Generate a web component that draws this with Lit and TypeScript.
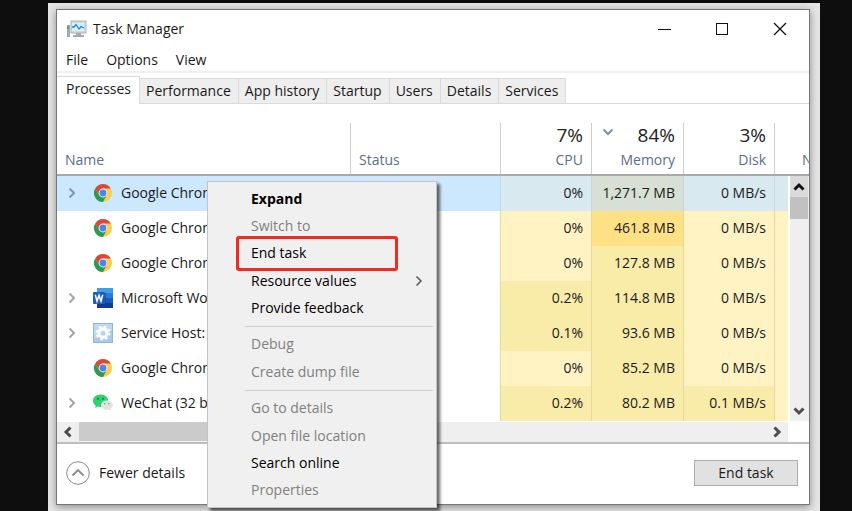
import { LitElement, html, svg, css, nothing } from "lit";
import { customElement, state } from "lit/decorators.js";
import { classMap } from "lit/directives/class-map.js";

type IconName = "chrome" | "word" | "gear" | "wechat";

interface ProcessRow {
  icon: IconName;
  name: string;
  group: boolean;
  cpu: string;
  memory: string;
  disk: string;
  cpuHeat: string;
  memoryHeat: string;
  diskHeat: string;
}

const row = (
  icon: IconName, name: string, group: boolean,
  cpu: string, memory: string, disk: string,
  cpuHeat = "low", memoryHeat = "mid", diskHeat = "low",
): ProcessRow => ({ icon, name, group, cpu, memory, disk, cpuHeat, memoryHeat, diskHeat });

const ROWS: ProcessRow[] = [
  row("chrome", "Google Chrome", true, "0%", "1,271.7 MB", "0 MB/s", "low", "max"),
  row("chrome", "Google Chrome", false, "0%", "461.8 MB", "0 MB/s", "low", "high"),
  row("chrome", "Google Chrome", false, "0%", "127.8 MB", "0 MB/s"),
  row("word", "Microsoft Word", true, "0.2%", "114.8 MB", "0 MB/s", "mid"),
  row("gear", "Service Host:", true, "0.1%", "93.6 MB", "0 MB/s", "mid"),
  row("chrome", "Google Chrome", false, "0%", "85.2 MB", "0 MB/s"),
  row("wechat", "WeChat (32 bit)", true, "0.2%", "80.2 MB", "0.1 MB/s", "mid", "mid", "mid"),
];

const TABS = ["Processes", "Performance", "App history", "Startup", "Users", "Details", "Services"];

interface MenuEntry { label: string; kind?: "bold" | "disabled" | "marked" | "sub"; }

const MENU: (MenuEntry | null)[] = [
  { label: "Expand", kind: "bold" },
  { label: "Switch to", kind: "disabled" },
  { label: "End task", kind: "marked" },
  { label: "Resource values", kind: "sub" },
  { label: "Provide feedback" },
  null,
  { label: "Debug", kind: "disabled" },
  { label: "Create dump file", kind: "disabled" },
  null,
  { label: "Go to details", kind: "disabled" },
  { label: "Open file location", kind: "disabled" },
  { label: "Search online" },
  { label: "Properties", kind: "disabled" },
];

const ICONS = {
  chrome: svg`
    <circle cx="10" cy="10" r="9" fill="#fccd48"/>
    <path d="M2.2 5.5 A9 9 0 0 0 10 19 L13.7 12.1 L6.3 12.1 Z" fill="#2a9a57"/>
    <path d="M2.2 5.5 A9 9 0 0 1 17.8 5.5 L10 5.5 L6.5 8 L6.3 12.1 Z" fill="#d9483b"/>
    <circle cx="10" cy="10" r="4.4" fill="#f1f3f4"/>
    <circle cx="10" cy="10" r="3.4" fill="#4a84ee"/>`,
  word: svg`
    <rect x="4" y="0" width="16" height="5" fill="#3f9fe6"/>
    <rect x="4" y="5" width="16" height="5" fill="#2b7cd3"/>
    <rect x="4" y="10" width="16" height="5" fill="#185abd"/>
    <rect x="4" y="15" width="16" height="5" fill="#103f91"/>
    <rect x="4" y="5" width="9" height="12" fill="#0d3a80" opacity=".5"/>
    <rect x="0" y="4" width="12" height="12" rx="1" fill="#1b5cbe"/>
    <path d="M2.3 6.8 L4 13.2 L6 7.4 L8 13.2 L9.7 6.8" fill="none" stroke="#fff" stroke-width="1.5"/>`,
  gear: svg`
    <rect x=".5" y=".5" width="19" height="19" fill="#a9cbe8" stroke="#8fb6d8"/>
    <path d="M1 1H19V8Q9 9 1 16Z" fill="#bfdaf0"/>
    <circle cx="10" cy="10" r="6.2" fill="none" stroke="#fff" stroke-width="2.4" stroke-dasharray="2.4 2.47"/>
    <circle cx="10" cy="10" r="4.1" fill="none" stroke="#fff" stroke-width="3.2"/>`,
  wechat: svg`
    <path d="M7.5 1.5C3.2 1.5 0 4.3 0 7.8c0 2 1.1 3.7 2.8 4.9L2 15l2.9-1.4c.8.2 1.7.4 2.6.4 4.300 0 7.700-2.700 7.700-6.200S11.800 1.500 7.500 1.500Z" fill="#2bd46c"/>
    <circle cx="5" cy="5.8" r="1" fill="#167a3f"/><circle cx="10" cy="5.8" r="1" fill="#167a3f"/>
    <path d="M13.8 7.5C10.3 7.5 8 9.7 8 12.2s2.300 4.700 5.800 4.700c.8 0 1.500-.1 2.200-.3l2.300 1.200-.6-2c1.300-.9 2.100-2.100 2.100-3.600 0-2.500-2.600-4.700-6-4.700Z" fill="#e3e3e3"/>
    <circle cx="11.8" cy="10.8" r=".8" fill="#8b8b8b"/><circle cx="15.7" cy="10.8" r=".8" fill="#8b8b8b"/>`,
};

const chevron = (dir: "right" | "left" | "up" | "down", kind = "") => {
  const d = {
    right: "M3.5 1.5 L8 6 L3.5 10.5",
    left: "M8.5 1.5 L4 6 L8.5 10.5",
    up: "M1.5 8.5 L6 4 L10.5 8.5",
    down: "M1.5 3.5 L6 8 L10.5 3.5",
  }[dir];
  return html`<svg class="chevron ${kind}" viewBox="0 0 12 12" aria-hidden="true"><path d=${d} /></svg>`;
};

@customElement("app-root")
export class AppRoot extends LitElement {
  @state() private activeTab = "Processes";

  static styles = css`
    :host {
      display: block;
      box-sizing: border-box;
      min-height: 100vh;
      padding: 3px 32px 0 48px;
      background: #0e0e0e;
      color: #1a1a1a;
      font: 14px/20px "Open Sans", "Noto Sans", sans-serif;
    }
    * { box-sizing: border-box; }
    button {
      margin: 0; padding: 0; border: 0; background: none;
      color: inherit; font: inherit; text-align: left;
    }
    svg { display: block; flex: none; }

    .stage { position: relative; padding: 6px 10px 6px 8px; background: #e6e6e6; }
    .window {
      background: #fff;
      border: 1px solid #777;
      box-shadow: 0 2px 8px #0006;
    }

    .titlebar { display: flex; align-items: center; height: 38px; padding-left: 9px; }
    .app-icon { width: 22px; height: 18px; margin-right: 5px; }
    .title { flex: 1; margin: 0; font-size: 14px; font-weight: 400; }
    .caption { display: flex; width: 58px; height: 38px; align-items: center; justify-content: center; }
    .caption svg { width: 14px; height: 14px; fill: none; stroke: #111; }

    .menubar { display: flex; gap: 18px; height: 25px; padding: 2px 9px; border-bottom: 2px solid #f0f0f0; }

    .tabs { display: flex; align-items: flex-end; height: 31px; border-bottom: 1px solid #dadada; }
    .tab {
      height: 25px; padding: 0 7px 0 6px; text-align: center; white-space: nowrap;
      background: #eeeeee; border: 1px solid #d9d9d9; border-width: 1px 1px 0 0;
    }
    .tab.active {
      height: 28px; margin-bottom: -1px; padding: 0 8px 3px 9px; background: #fff;
    }

    .sheet { display: grid; grid-template-columns: minmax(0, 1fr) 21px; }
    table {
      grid-area: 1 / 1 / 2 / 3;
      width: 100%; table-layout: fixed; border-collapse: separate; border-spacing: 0;
    }
    .c-status { width: 150px; }
    .c-num { width: 92px; }
    .c-cpu { width: 91px; }
    .c-net { width: 35px; }
    th {
      height: 72px; padding: 19px 0 0; overflow: hidden; vertical-align: bottom;
      border-bottom: 2px solid #a9a9a9; color: #5c6d88; font-weight: 400; text-align: left;
    }
    .head {
      display: flex; flex-direction: column; justify-content: flex-end; gap: 3px;
      height: 51px; padding: 0 8px 4px; border-left: 1px solid #cfcfcf; white-space: nowrap;
    }
    .head.first { border-left: 0; }
    .head.num { text-align: right; }
    .head.net { padding-left: 27px; }
    .load { display: flex; justify-content: flex-end; align-items: center; color: #222; font-size: 19px; line-height: 24px; }
    .load .sort { margin: 0 auto 6px 2px; }

    td { height: 35px; padding: 0 8px 2px; white-space: nowrap; overflow: hidden; }
    td.heat { text-align: right; border-left: 1px solid #e6d9a0; }
    .low { background: #fff3c4; }
    .mid { background: #f9eba8; }
    .high { background: #ffe185; }
    .selected td { background: #cce8ff; }
    .selected td.heat { background: #d8e9ef; border-left-color: #c3d9e2; }
    .selected td.heat.max { background: #d8e0d5; }
    .proc { display: flex; align-items: center; }
    .twist { width: 14px; height: 20px; margin-right: 14px; display: grid; place-items: center; }
    .proc-icon { width: 20px; height: 20px; margin-right: 8px; }

    .chevron { width: 12px; height: 12px; fill: none; stroke: #222; stroke-width: 2; }
    .chevron.soft { stroke: #a0a5aa; }
    .chevron.bar { stroke: #4d4d4d; stroke-width: 3; }
    .chevron.dark { stroke: #111; stroke-width: 3; }
    .chevron.sort { stroke: #7d8f9f; }
    .chevron.thin { stroke: #555; stroke-width: 1.5; }
    .selected .chevron { stroke: #8397a8; }

    .vscroll {
      grid-area: 1 / 2 / 2 / 3; margin-top: 72px; padding-right: 1px;
      display: flex; flex-direction: column; background: #efefef; border-left: 2px solid #fff;
    }
    .vscroll button { height: 21px; display: grid; place-items: center; }
    .vscroll .up { background: #dadada; }
    .vthumb { height: 22px; background: #c1c1c1; }
    .vscroll .down { margin-top: auto; }

    .hscroll {
      display: flex; height: 20px; margin: 1px 21px 0 0; background: #efefef;
    }
    .hscroll button { width: 22px; height: 20px; display: grid; place-items: center; }
    .hthumb { flex: none; width: 45%; height: 19px; background: #cbcbcb; }
    .hscroll .right { margin-left: auto; }

    .footer {
      display: flex; align-items: center; justify-content: space-between;
      height: 62px; padding: 0 11px 2px 9px; border-top: 2px solid #bdbdbd;
    }
    .fewer { display: flex; align-items: center; gap: 9px; }
    .round { width: 24px; height: 24px; fill: none; stroke: #8a8a8a; }
    .end { width: 104px; height: 26px; text-align: center; background: #e1e1e1; border: 1px solid #adadad; }

    .context {
      position: absolute; left: 159px; top: 178px; width: 230px; height: 327px;
      display: flex; flex-direction: column; padding: 3px 0;
      background: #f0f0f0; border: 1px solid #c4c4c4;
      box-shadow: 3px 3px 3px #0009; color: #000;
    }
    .item { position: relative; flex: 1; display: flex; align-items: center; padding: 0 11px 0 43px; }
    .item span { flex: 1; }
    .item.bold { font-weight: 700; }
    .item:disabled { color: #808080; }
    .context hr { height: 1px; margin: 4px 3px 4px 37px; border: 0; background: #cfcfcf; }
    .item.marked::after {
      content: ""; position: absolute; inset: -4px 38px -4px 28px;
      border: 3px solid #f22a22; border-radius: 3px;
    }
  `;

  private renderRow(r: ProcessRow, i: number) {
    return html`<tr class=${classMap({ selected: i === 0 })}>
      <td>
        <div class="proc">
          ${r.group
            ? html`<button class="twist" aria-label="Expand group">${chevron("right", "soft")}</button>`
            : html`<div class="twist"></div>`}
          <svg class="proc-icon" viewBox="0 0 20 20" aria-hidden="true">${ICONS[r.icon]}</svg>
          ${r.name}
        </div>
      </td>
      <td></td>
      <td class="heat ${r.cpuHeat}">${r.cpu}</td>
      <td class="heat ${r.memoryHeat}">${r.memory}</td>
      <td class="heat ${r.diskHeat}">${r.disk}</td>
      <td class="heat low"></td>
    </tr>`;
  }

  private renderMenuEntry(e: MenuEntry | null) {
    if (!e) return html`<hr />`;
    return html`<button class="item ${e.kind ?? ""}" role="menuitem" ?disabled=${e.kind === "disabled"}>
      <span>${e.label}</span>${e.kind === "sub" ? chevron("right", "thin") : nothing}
    </button>`;
  }

  render() {
    return html`
      <div class="stage">
        <main class="window">
          <header class="titlebar">
            <svg class="app-icon" viewBox="0 0 22 18" aria-hidden="true">
              <rect x="1" y="5" width="3" height="12" fill="#a3a9ad" />
              <rect x="1" y="6" width="2" height="3" fill="#4fae54" />
              <rect x="5" y="1" width="15" height="12" fill="#d5d9dc" stroke="#aeb3b7" />
              <rect x="6" y="3" width="12" height="8" fill="#d6efff" />
              <path d="M6 7 L8 7 L10 4.5 L13 9 L15 6.5 L18 8" fill="none" stroke="#2385c6" stroke-width="1.3" />
              <path d="M10 13H15V15H18V17H7V15H10Z" fill="#a6abaf" />
            </svg>
            <h1 class="title">Task Manager</h1>
            <button class="caption" aria-label="Minimize"><svg viewBox="0 0 14 14"><path d="M1 7.5H14" /></svg></button>
            <button class="caption" aria-label="Maximize"><svg viewBox="0 0 14 14"><rect x="1.5" y="1.5" width="11" height="11" /></svg></button>
            <button class="caption" aria-label="Close"><svg viewBox="0 0 14 14"><path d="M1 1L13 13M13 1L1 13" stroke-width="1.3" /></svg></button>
          </header>
          <nav class="menubar">
            ${["File", "Options", "View"].map((m) => html`<button>${m}</button>`)}
          </nav>
          <div class="tabs" role="tablist">
            ${TABS.map((t) => html`<button role="tab"
              class=${classMap({ tab: true, active: t === this.activeTab })}
              aria-selected=${t === this.activeTab ? "true" : "false"}
              @click=${() => { this.activeTab = t; }}>${t}</button>`)}
          </div>
          <div class="sheet">
            <table>
              <colgroup>
                <col /><col class="c-status" /><col class="c-cpu" /><col class="c-num" /><col class="c-cpu" /><col class="c-net" />
              </colgroup>
              <thead>
                <tr>
                  <th><div class="head first">Name</div></th>
                  <th><div class="head">Status</div></th>
                  <th><div class="head num"><div class="load">7%</div>CPU</div></th>
                  <th><div class="head num"><div class="load">${chevron("down", "sort")}84%</div>Memory</div></th>
                  <th><div class="head num"><div class="load">3%</div>Disk</div></th>
                  <th><div class="head net">Network</div></th>
                </tr>
              </thead>
              <tbody>${ROWS.map((r, i) => this.renderRow(r, i))}</tbody>
            </table>
            <div class="vscroll">
              <button class="up" aria-label="Scroll up">${chevron("up", "dark")}</button>
              <div class="vthumb"></div>
              <button class="down" aria-label="Scroll down">${chevron("down", "bar")}</button>
            </div>
          </div>
          <div class="hscroll">
            <button aria-label="Scroll left">${chevron("left", "bar")}</button>
            <div class="hthumb"></div>
            <button class="right" aria-label="Scroll right">${chevron("right", "bar")}</button>
          </div>
          <footer class="footer">
            <button class="fewer">
              <svg class="round" viewBox="0 0 24 24" aria-hidden="true">
                <circle cx="12" cy="12" r="11.3" />
                <path d="M6.5 14.5L12 9L17.5 14.5" stroke-width="1.8" />
              </svg>
              Fewer details
            </button>
            <button class="end">End task</button>
          </footer>
        </main>
        <div class="context" role="menu">${MENU.map((e) => this.renderMenuEntry(e))}</div>
      </div>
    `;
  }
}
